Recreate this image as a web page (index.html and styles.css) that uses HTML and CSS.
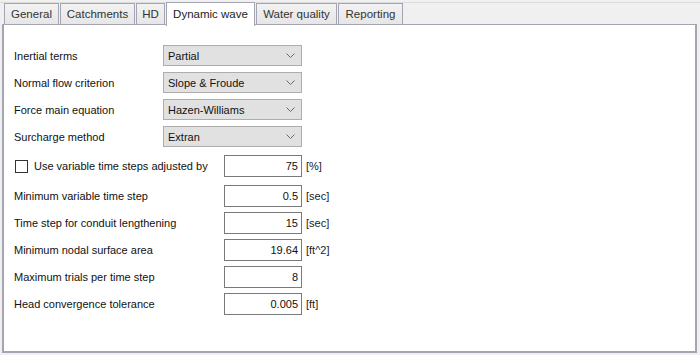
FILE: index.html
```html
<!DOCTYPE html>
<html>
<head>
<meta charset="utf-8">
<link rel="stylesheet" href="styles.css">
</head>
<body>
<div class="window">
  <div class="tabs">
    <div class="tab t-general">General</div>
    <div class="tab t-catch">Catchments</div>
    <div class="tab t-hd">HD</div>
    <div class="tab active t-dyn">Dynamic wave</div>
    <div class="tab t-wq">Water quality</div>
    <div class="tab t-rep">Reporting</div>
  </div>
  <div class="panel">
    <div class="combos">
      <div class="row"><span class="label">Inertial terms</span><div class="combo"><span>Partial</span><svg class="chev" width="9" height="5" viewBox="0 0 9 5"><polyline points="0.5,0.5 4.5,4.5 8.5,0.5" fill="none" stroke="#6a6a6a" stroke-width="1"/></svg></div></div>
      <div class="row"><span class="label">Normal flow criterion</span><div class="combo"><span>Slope &amp; Froude</span><svg class="chev" width="9" height="5" viewBox="0 0 9 5"><polyline points="0.5,0.5 4.5,4.5 8.5,0.5" fill="none" stroke="#6a6a6a" stroke-width="1"/></svg></div></div>
      <div class="row"><span class="label">Force main equation</span><div class="combo"><span>Hazen-Williams</span><svg class="chev" width="9" height="5" viewBox="0 0 9 5"><polyline points="0.5,0.5 4.5,4.5 8.5,0.5" fill="none" stroke="#6a6a6a" stroke-width="1"/></svg></div></div>
      <div class="row"><span class="label">Surcharge method</span><div class="combo"><span>Extran</span><svg class="chev" width="9" height="5" viewBox="0 0 9 5"><polyline points="0.5,0.5 4.5,4.5 8.5,0.5" fill="none" stroke="#6a6a6a" stroke-width="1"/></svg></div></div>
    </div>
    <div class="fields">
      <div class="frow first"><span class="flabel"><span class="checkbox"></span>Use variable time steps adjusted by</span><div class="field">75</div><span class="unit">[%]</span></div>
      <div class="frow"><span class="flabel">Minimum variable time step</span><div class="field">0.5</div><span class="unit">[sec]</span></div>
      <div class="frow"><span class="flabel">Time step for conduit lengthening</span><div class="field">15</div><span class="unit">[sec]</span></div>
      <div class="frow"><span class="flabel">Minimum nodal surface area</span><div class="field">19.64</div><span class="unit">[ft^2]</span></div>
      <div class="frow"><span class="flabel">Maximum trials per time step</span><div class="field">8</div></div>
      <div class="frow"><span class="flabel">Head convergence tolerance</span><div class="field">0.005</div><span class="unit">[ft]</span></div>
    </div>
  </div>
</div>
</body>
</html>
```
FILE: styles.css
```css
html, body {
  margin: 0;
  padding: 0;
}
body {
  background: #f0f0f0;
  font-family: "Liberation Sans", Arial, sans-serif;
  font-size: 11px;
  color: #111;
  width: 700px;
  height: 355px;
  overflow: hidden;
}
.window {
  border-top: 1px solid #dcdcdc;
  margin-top: 2px;
  padding: 0 3px 0 2px;
}
.tabs {
  display: flex;
  padding-left: 2px;
  height: 21px;
  align-items: flex-end;
  position: relative;
  z-index: 2;
}
.tab {
  height: 21px;
  box-sizing: border-box;
  border: 1px solid #a4a4b2;
  border-bottom: none;
  background: linear-gradient(#f2f2f2, #e6e6e6);
  color: #333;
  display: flex;
  align-items: center;
  justify-content: center;
  margin-right: 1px;
  font-size: 11.5px;
}
.t-general { width: 55px; }
.t-catch { width: 75px; }
.t-hd { width: 29px; }
.t-dyn { width: 89px; }
.t-wq { width: 81px; }
.t-rep { width: 65px; }
.tab.active {
  background: #fff;
  height: 24px;
  margin-bottom: -2px;
  color: #222;
  padding-bottom: 2px;
}
.panel {
  background: #fff;
  border: 2px solid #a4a4b2;
  border-top-width: 1px;
  height: 329px;
  box-sizing: border-box;
  padding: 20px 0 0 10px;
}
.combos {
  display: flex;
  flex-direction: column;
  gap: 6px;
}
.row {
  display: flex;
  align-items: center;
  height: 21px;
}
.label {
  width: 149px;
}
.combo {
  width: 139px;
  height: 21px;
  box-sizing: border-box;
  border: 1px solid #adadad;
  background: #e1e1e1;
  display: flex;
  align-items: center;
  justify-content: space-between;
  padding: 0 6px 0 4px;
}
.fields {
  margin-top: 8px;
  display: flex;
  flex-direction: column;
  gap: 5px;
}
.frow {
  display: flex;
  align-items: center;
  height: 22px;
}
.frow.first {
  margin-bottom: 3px;
}
.flabel {
  width: 210px;
  display: flex;
  align-items: center;
}
.checkbox {
  width: 13px;
  height: 13px;
  box-sizing: border-box;
  border: 1px solid #333;
  background: #fff;
  margin: 0 6px 0 1px;
}
.field {
  width: 78px;
  height: 22px;
  box-sizing: border-box;
  border: 1px solid #7a7a7a;
  background: #fff;
  text-align: right;
  padding: 0 3px;
  line-height: 20px;
}
.unit {
  margin-left: 4px;
  color: #1a1a2a;
}
```
